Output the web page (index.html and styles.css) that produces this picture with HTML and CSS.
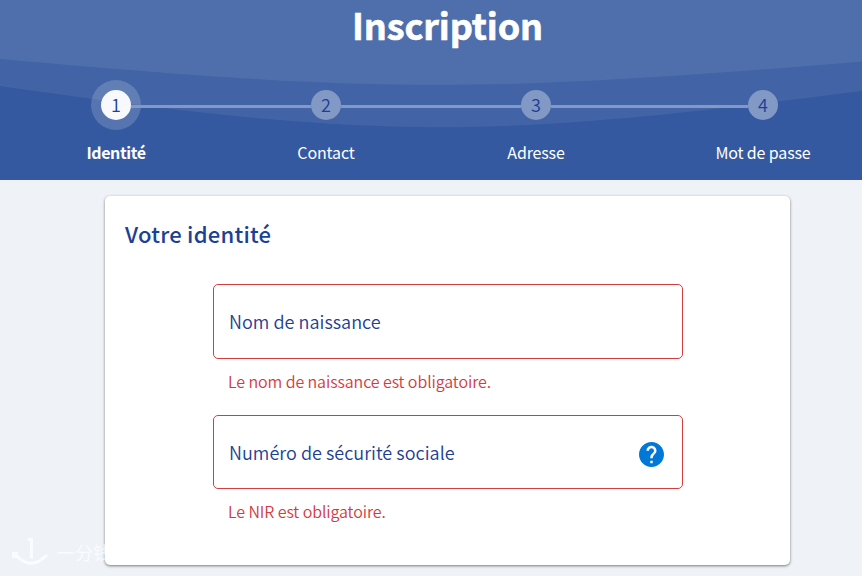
FILE: index.html
```html
<!doctype html>
<html lang="fr">
    <head>
        <meta charset="utf-8">
        <title>Inscription</title>
        <link rel="stylesheet" href="styles.css">
    </head>
    <body>
        <header>
            <svg class="waves" viewBox="0 0 862 180" preserveAspectRatio="none">
                <path d="M0 0V86C378 140 480 140 862 91V0Z" />
                <path d="M0 0V59C380 93 480 93 862 61.5V0Z" />
            </svg>
            <h1>Inscription</h1>
            <div class="steps">
                <span class="dot active">1</span>
                <span class="line"></span>
                <span class="dot">2</span>
                <span class="line"></span>
                <span class="dot">3</span>
                <span class="line"></span>
                <span class="dot">4</span>
                <span class="label current">Identité</span>
                <span class="label second">Contact</span>
                <span class="label third">Adresse</span>
                <span class="label fourth">Mot de passe</span>
            </div>
        </header>
        <main>
            <h2>Votre identité</h2>
            <form>
                <div class="field">
                    <label>Nom de naissance</label>
                </div>
                <p class="error">Le nom de naissance est obligatoire.</p>
                <div class="field nir">
                    <label>Numéro de sécurité sociale</label>
                    <svg class="help" viewBox="2 2 20 20">
                        <path d="M12 2C6.48 2 2 6.48 2 12s4.48 10 10 10 10-4.48 10-10S17.52 2 12 2zm1 17h-2v-2h2v2zm2.07-7.75l-.9.92C13.45 12.9 13 13.5 13 15h-2v-.5c0-1.1.45-2.1 1.17-2.83l1.24-1.26c.37-.36.59-.86.59-1.41 0-1.1-.9-2-2-2s-2 .9-2 2H8c0-2.21 1.79-4 4-4s4 1.79 4 4c0 .88-.36 1.68-.93 2.25z" />
                    </svg>
                </div>
                <p class="error">Le NIR est obligatoire.</p>
            </form>
        </main>
        <div class="watermark">
            <svg viewBox="0 0 38 30">
                <path d="M17 2.500h3.500v19M4 17q15 18 32 1" />
                <path class="knob" d="M1 15h6v6H1z" />
            </svg>
            <span>一分钱</span>
        </div>
    </body>
</html>
```

FILE: styles.css
```css
* {
    box-sizing: border-box;
}

body {
    margin: 0;
    height: 576px;
    overflow: hidden;
    background: #eff3f8;
    color: #1b4094;
    font-family: "Noto Sans CJK SC", "Noto Sans", sans-serif;
}

header {
    position: relative;
    height: 180px;
    background: #3459a0;
    color: white;
}

.waves {
    position: absolute;
    top: 0;
    left: 0;
    width: 100%;
    height: 100%;
    fill: white;
    fill-opacity: 0.07;
}

h1 {
    position: relative;
    margin: 0;
    padding-left: 33px;
    font-size: 36px;
    letter-spacing: -0.1px;
    line-height: 48px;
    height: 90px;
    text-align: center;
    -webkit-text-stroke: 0.6px white;
}

.steps {
    position: relative;
    display: grid;
    grid-template-columns: 30px 180px 30px 180px 30px 197px 30px;
    grid-template-rows: 30px 24px;
    row-gap: 20px;
    padding-left: 101px;
}

.dot {
    border-radius: 50%;
    background: #8298c5;
    color: #1b4094;
    font-size: 18px;
    font-weight: 350;
    line-height: 29px;
    text-align: center;
}

.dot.active {
    background: #f7f9fd;
    box-shadow: 0 0 0 10px rgba(255, 255, 255, 0.17);
}

.line {
    height: 3px;
    margin-top: 15px;
    background: #8298c5;
}

.label {
    grid-column: 1;
    justify-self: center;
    font-size: 16px;
    letter-spacing: -0.15px;
    line-height: 24px;
    white-space: nowrap;
}

.current {
    font-weight: bold;
    letter-spacing: -0.4px;
}

.second {
    grid-column: 3;
}

.third {
    grid-column: 5;
}

.fourth {
    grid-column: 7;
}

main {
    width: 685px;
    height: 369px;
    margin: 16px 0 0 105px;
    padding: 18px 20px;
    background: white;
    border-radius: 5px;
    box-shadow: 0 1px 3px rgba(0, 0, 0, 0.5);
}

h2 {
    margin: 0;
    font-size: 22px;
    font-weight: 500;
    letter-spacing: 0.25px;
    line-height: 38px;
}

form {
    width: 470px;
    margin: 32px 0 0 88px;
}

.field {
    display: flex;
    align-items: center;
    justify-content: space-between;
    height: 75px;
    padding: 0 18px 2px 15px;
    border: 1px solid #d43d40;
    border-radius: 5px;
    font-size: 18px;
    font-weight: 350;
    letter-spacing: 0.03px;
}

.nir {
    height: 74px;
    padding-bottom: 0;
}

.help {
    width: 25px;
    height: 25px;
    margin-top: 5px;
    fill: #0078d7;
}

.error {
    height: 56px;
    margin: 0;
    padding: 10px 0 0 15px;
    color: #d33b40;
    font-size: 16px;
    font-weight: 350;
    letter-spacing: -0.1px;
    line-height: 24px;
}

.watermark {
    position: absolute;
    left: 11px;
    top: 535px;
    display: flex;
    align-items: center;
    gap: 8px;
    color: rgba(255, 255, 255, 0.7);
    font-size: 18px;
    line-height: 34px;
    white-space: nowrap;
}

.watermark svg {
    width: 38px;
    height: 30px;
    fill: none;
    stroke: #fafcfe;
    stroke-width: 3;
}

.watermark .knob {
    fill: #fafcfe;
    stroke: none;
}
```
